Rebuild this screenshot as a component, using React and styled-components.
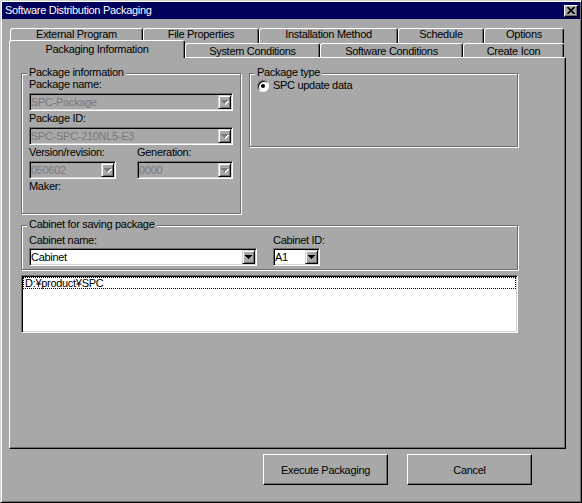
import React from "react";
import styled, { createGlobalStyle } from "styled-components";

const FACE = "#a8a8a8";
const SHADOW = "#6e6e6e";
const LIGHT = "#d4d4d4";

const GlobalStyle = createGlobalStyle`
  html, body {
    margin: 0;
    padding: 0;
    background: ${FACE};
  }
  body {
    font-family: "Liberation Sans", Arial, sans-serif;
    font-size: 11px;
    color: #000;
  }
  * {
    box-sizing: border-box;
  }
`;

const Window = styled.div`
  width: 582px;
  height: 503px;
  padding: 1px;
  background: ${FACE};
  border: 1px solid;
  border-color: ${LIGHT} #000 #000 ${LIGHT};
  box-shadow: inset 1px 1px 0 #fff, inset -1px -1px 0 ${SHADOW};
  display: flex;
  flex-direction: column;
  letter-spacing: -0.3px;
`;

const TitleBar = styled.div`
  height: 17px;
  background: #00005c;
  color: #fff;
  display: flex;
  align-items: center;
  justify-content: space-between;
  padding: 0 2px 0 3px;
  line-height: 13px;
`;

const CloseButton = styled.div`
  width: 14px;
  height: 12px;
  background: ${FACE};
  border: 1px solid;
  border-color: #fff #000 #000 #fff;
  box-shadow: inset -1px -1px 0 ${SHADOW};
  display: flex;
  align-items: center;
  justify-content: center;
`;

const TabStrip = styled.div`
  margin-top: 9px;
  padding-left: 7px;
`;

const TabRow = styled.div`
  display: flex;
  align-items: flex-end;
  height: ${(p) => (p.$front ? 17 : 15)}px;
  padding-left: ${(p) => (p.$front ? 0 : 1)}px;
  margin-top: ${(p) => (p.$front ? -3 : 0)}px;
  position: ${(p) => (p.$front ? "relative" : "static")};
  z-index: ${(p) => (p.$front ? 1 : "auto")};
`;

const Tab = styled.div`
  width: ${(p) => p.$w}px;
  height: ${(p) => (p.$active ? 18 : p.$front ? 14 : 15)}px;
  margin-bottom: ${(p) => (p.$active ? -1 : 0)}px;
  background: ${FACE};
  border-top: 1px solid #fff;
  border-left: 1px solid #fff;
  border-right: 1px solid #000;
  border-radius: 3px 3px 0 0;
  box-shadow: inset -1px 0 0 ${SHADOW};
  display: flex;
  align-items: center;
  justify-content: center;
  padding-bottom: ${(p) => (p.$active ? 2 : p.$front ? 0 : 4)}px;
  white-space: nowrap;
`;

const Panel = styled.div`
  margin-left: 7px;
  width: 557px;
  height: 392px;
  border: 1px solid;
  border-color: #fff #000 #000 #fff;
  box-shadow: inset -1px -1px 0 ${SHADOW};
  padding: 15px 0 0 11px;
`;

const TopRow = styled.div`
  display: flex;
  align-items: flex-start;
  gap: 8px;
`;

const Group = styled.div`
  position: relative;
  width: ${(p) => p.$w}px;
  height: ${(p) => p.$h}px;
  margin-top: ${(p) => p.$mt || 0}px;
  border: 1px solid ${SHADOW};
  box-shadow: inset 1px 1px 0 #fff, 1px 1px 0 #fff;
  padding: ${(p) => p.$pt}px 0 0 7px;
`;

const Legend = styled.span`
  position: absolute;
  top: -8px;
  left: 5px;
  padding: 0 2px;
  background: ${FACE};
  line-height: 13px;
  white-space: nowrap;
`;

const Stack = styled.div`
  display: flex;
  flex-direction: column;
  gap: 1px;
`;

const Field = styled.div`
  display: flex;
  flex-direction: column;
`;

const Label = styled.div`
  line-height: 13px;
  margin-bottom: ${(p) => (p.$tight ? 1 : 2)}px;
  white-space: nowrap;
`;

const SplitRow = styled.div`
  display: flex;
  justify-content: space-between;
  width: 204px;
`;

const CabinetRow = styled.div`
  display: flex;
  gap: 16px;
`;

const ComboBox = styled.div`
  width: ${(p) => p.$w}px;
  height: 18px;
  display: flex;
  align-items: center;
  padding: 1px;
  border: 1px solid;
  border-color: ${SHADOW} #fff #fff ${SHADOW};
  box-shadow: inset 1px 1px 0 #000, inset -1px -1px 0 ${LIGHT};
  background: ${(p) => (p.$disabled ? FACE : "#fff")};
  color: ${(p) => (p.$disabled ? "#7a7a7a" : "#000")};
`;

const ComboValue = styled.span`
  flex: 1;
  line-height: 14px;
  overflow: hidden;
  white-space: nowrap;
`;

const DropButton = styled.div`
  width: 13px;
  height: 14px;
  background: ${FACE};
  border: 1px solid;
  border-color: ${LIGHT} #000 #000 ${LIGHT};
  box-shadow: inset 1px 1px 0 #fff, inset -1px -1px 0 ${SHADOW};
  display: flex;
  align-items: center;
  justify-content: center;
`;

const RadioRow = styled.div`
  display: flex;
  align-items: center;
  gap: 4px;
  line-height: 13px;
`;

const RadioDot = styled.span`
  width: 12px;
  height: 12px;
  border-radius: 50%;
  background: #fff;
  border: 1px solid;
  border-color: ${SHADOW} #fff #fff ${SHADOW};
  box-shadow: inset 1px 1px 0 #000;
  display: flex;
  align-items: center;
  justify-content: center;
  &::after {
    content: "";
    width: 4px;
    height: 4px;
    border-radius: 50%;
    background: #000;
  }
`;

const ListBox = styled.div`
  margin-top: 5px;
  width: 497px;
  height: 58px;
  background: #fff;
  padding: 1px;
  border: 1px solid;
  border-color: ${SHADOW} #fff #fff ${SHADOW};
  box-shadow: inset 1px 1px 0 #000, inset -1px -1px 0 ${LIGHT};
`;

const ListItem = styled.div`
  height: 12px;
  line-height: 10px;
  padding-left: 1px;
  border: 1px dotted #000;
  white-space: nowrap;
`;

const ButtonRow = styled.div`
  margin-top: 5px;
  display: flex;
  justify-content: flex-end;
  gap: 19px;
  padding-right: 48px;
`;

const Button = styled.div`
  width: 125px;
  height: 31px;
  background: ${FACE};
  border: 1px solid;
  border-color: #fff #000 #000 #fff;
  box-shadow: inset -1px -1px 0 ${SHADOW};
  display: flex;
  align-items: center;
  justify-content: center;
`;

function Arrow({ disabled }) {
  return (
    <svg width="8" height="5" viewBox="0 0 8 5" shapeRendering="crispEdges">
      {disabled && <polygon points="1,1 8,1 4.5,5" fill="#fff" />}
      <polygon points="0,0 7,0 3.5,4" fill={disabled ? "#7a7a7a" : "#000"} />
    </svg>
  );
}

function Combo({ w, value, disabled }) {
  return (
    <ComboBox $w={w} $disabled={disabled}>
      <ComboValue>{value}</ComboValue>
      <DropButton>
        <Arrow disabled={disabled} />
      </DropButton>
    </ComboBox>
  );
}

const backTabs = [
  ["External Program", 133],
  ["File Properties", 116],
  ["Installation Method", 139],
  ["Schedule", 86],
  ["Options", 80],
];

const frontTabs = [
  ["Packaging Information", 176, true],
  ["System Conditions", 135],
  ["Software Conditions", 143],
  ["Create Icon", 101],
];

export default function App() {
  return (
    <>
      <GlobalStyle />
      <Window>
        <TitleBar>
          <span>Software Distribution Packaging</span>
          <CloseButton>
            <svg width="8" height="7" viewBox="0 0 8 7">
              <path d="M0.5 0 L7.5 7 M7.5 0 L0.5 7" stroke="#000" strokeWidth="1.6" />
            </svg>
          </CloseButton>
        </TitleBar>

        <TabStrip>
          <TabRow>
            {backTabs.map(([label, w]) => (
              <Tab key={label} $w={w}>
                {label}
              </Tab>
            ))}
          </TabRow>
          <TabRow $front>
            {frontTabs.map(([label, w, active]) => (
              <Tab key={label} $w={w} $front $active={active}>
                {label}
              </Tab>
            ))}
          </TabRow>
        </TabStrip>

        <Panel>
          <TopRow>
            <Group $w={220} $h={141} $pt={4}>
              <Legend>Package information</Legend>
              <Stack>
                <Field>
                  <Label>Package name:</Label>
                  <Combo w={204} value="SPC-Package" disabled />
                </Field>
                <Field>
                  <Label>Package ID:</Label>
                  <Combo w={204} value="SPC-SPC-210NL5-E3" disabled />
                </Field>
                <SplitRow>
                  <Field>
                    <Label>Version/revision:</Label>
                    <Combo w={87} value="050602" disabled />
                  </Field>
                  <Field>
                    <Label>Generation:</Label>
                    <Combo w={96} value="0000" disabled />
                  </Field>
                </SplitRow>
                <Label>Maker:</Label>
              </Stack>
            </Group>

            <Group $w={269} $h={74} $pt={5}>
              <Legend>Package type</Legend>
              <RadioRow>
                <RadioDot />
                <span>SPC update data</span>
              </RadioRow>
            </Group>
          </TopRow>

          <Group $w={497} $h={45} $pt={8} $mt={11}>
            <Legend>Cabinet for saving package</Legend>
            <CabinetRow>
              <Field>
                <Label $tight>Cabinet name:</Label>
                <Combo w={228} value="Cabinet" />
              </Field>
              <Field>
                <Label $tight>Cabinet ID:</Label>
                <Combo w={47} value="A1" />
              </Field>
            </CabinetRow>
          </Group>

          <ListBox>
            <ListItem>D:¥product¥SPC</ListItem>
          </ListBox>
        </Panel>

        <ButtonRow>
          <Button>Execute Packaging</Button>
          <Button>Cancel</Button>
        </ButtonRow>
      </Window>
    </>
  );
}
